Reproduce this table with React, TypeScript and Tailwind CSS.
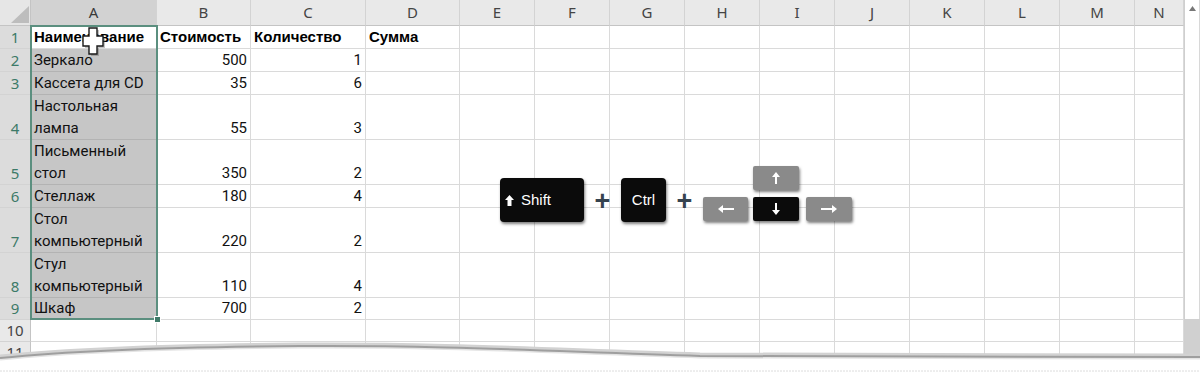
import React from "react";

const COLS = ["A", "B", "C", "D", "E", "F", "G", "H", "I", "J", "K", "L", "M", "N"];

type Row = { n: number; a?: string[]; b?: string; c?: string; d?: string; head?: boolean };

const ROWS: Row[] = [
  { n: 1, a: ["Наименование"], b: "Стоимость", c: "Количество", d: "Сумма", head: true },
  { n: 2, a: ["Зеркало"], b: "500", c: "1" },
  { n: 3, a: ["Кассета для CD"], b: "35", c: "6" },
  { n: 4, a: ["Настольная", "лампа"], b: "55", c: "3" },
  { n: 5, a: ["Письменный", "стол"], b: "350", c: "2" },
  { n: 6, a: ["Стеллаж"], b: "180", c: "4" },
  { n: 7, a: ["Стол", "компьютерный"], b: "220", c: "2" },
  { n: 8, a: ["Стул", "компьютерный"], b: "110", c: "4" },
  { n: 9, a: ["Шкаф"], b: "700", c: "2" },
  { n: 10 },
  { n: 11 },
];

const cellFont = "font-['Roboto',sans-serif] text-[15px] text-[#111]";
const boldFont = "font-['Liberation_Sans',Arial,sans-serif] font-bold text-[15px] text-black";
const headFont = "font-['Noto_Sans',sans-serif] text-[15px]";

function Cell({ row, col }: { row: Row; col: string }) {
  const inSel = col === "A" && row.n <= 9;
  const bg = inSel && row.n > 1 ? "bg-[#c6c6c6] border-[#b3b3b3]" : "bg-white border-[#dadada]";
  let content: React.ReactNode = null;
  let align = "items-start";
  if (row.head) {
    const t = col === "A" ? row.a?.[0] : col === "B" ? row.b : col === "C" ? row.c : col === "D" ? row.d : undefined;
    if (t) content = <span className={`${boldFont} whitespace-nowrap`}>{t}</span>;
  } else if (col === "A" && row.a) {
    content = row.a.map((l) => (
      <span key={l} className={`${cellFont} whitespace-nowrap`}>{l}</span>
    ));
  } else if ((col === "B" && row.b) || (col === "C" && row.c)) {
    align = "items-end";
    content = <span className={cellFont}>{col === "B" ? row.b : row.c}</span>;
  }
  return (
    <div className={`flex flex-col justify-end ${align} overflow-visible border-r border-b px-[3px] leading-[22px] ${bg}`}>
      {content}
    </div>
  );
}

function UpArrow({ className }: { className?: string }) {
  return (
    <svg width="8" height="12" viewBox="0 0 8 12" className={className}>
      <path d="M4 0 L8 5 L5 5 V12 H3 V5 H0 Z" fill="#fff" />
    </svg>
  );
}

function SideArrow({ flip }: { flip?: boolean }) {
  return (
    <svg width="16" height="8" viewBox="0 0 16 8" className={flip ? "scale-x-[-1]" : ""}>
      <path d="M0 4 L5 0 V3 H16 V5 H5 V8 Z" fill="#fff" />
    </svg>
  );
}

function Keys() {
  const plus = (
    <div className="flex h-[44px] w-[37px] items-center justify-center pt-[2px] font-['Liberation_Sans',Arial,sans-serif] text-[27px] font-bold leading-none text-[#36434f]">
      +
    </div>
  );
  const key = "shadow-[1px_2px_3px_rgba(0,0,0,0.5)]";
  return (
    <div className="absolute left-[500px] top-[166px] flex items-end">
      <div className={`flex h-[44px] w-[84px] items-center gap-[7px] rounded-[4px] bg-[#0b0b0b] pl-[5px] pt-[1px] ${key}`}>
        <svg width="9" height="11" viewBox="0 0 9 11">
          <path d="M4.5 0 L9 5 L6.5 5 V11 H2.5 V5 H0 Z" fill="#fff" />
        </svg>
        <span className="font-['Liberation_Sans',Arial,sans-serif] text-[15px] text-white">Shift</span>
      </div>
      {plus}
      <div className={`flex h-[44px] w-[45px] items-center justify-center rounded-[4px] bg-[#0b0b0b] pt-[1px] ${key}`}>
        <span className="font-['Liberation_Sans',Arial,sans-serif] text-[15px] text-white">Ctrl</span>
      </div>
      {plus}
      <div className="mb-[1px] flex flex-col items-start gap-[7px]">
        <div className={`ml-[50px] flex h-[24px] w-[46px] items-center justify-center rounded-[2px] bg-[#8a8a8a] ${key}`}>
          <UpArrow />
        </div>
        <div className="flex gap-[5px]">
          <div className={`flex h-[24px] w-[45px] items-center justify-center rounded-[2px] bg-[#8a8a8a] ${key}`}>
            <SideArrow />
          </div>
          <div className={`flex h-[24px] w-[46px] items-center justify-center rounded-[2px] bg-[#0b0b0b] ${key}`}>
            <UpArrow className="rotate-180" />
          </div>
          <div className={`ml-[2px] flex h-[24px] w-[46px] items-center justify-center rounded-[2px] bg-[#8a8a8a] ${key}`}>
            <SideArrow flip />
          </div>
        </div>
      </div>
    </div>
  );
}

export default function App() {
  return (
    <div className="relative h-[373px] w-[1200px] overflow-hidden bg-white">
      <div className="flex">
        <div className="grid grid-cols-[31px_126px_94px_115px_94px_repeat(9,75px)_49px] grid-rows-[26px_23px_23px_23px_45px_45px_23px_45px_45px_22px_22px_22px]">
          {/* corner */}
          <div className="flex items-end justify-end border-r border-b border-[#c4c4c4] bg-[#e6e6e6] pb-[2px] pr-[1px]">
            <svg width="18" height="17" viewBox="0 0 18 17">
              <path d="M0 17 L18 17 L18 0 Z" fill="#bdbdbd" />
            </svg>
          </div>
          {COLS.map((c) => (
            <div
              key={c}
              className={`flex items-center justify-center border-r border-b border-r-[#d3d3d3] border-b-[#c4c4c4] ${headFont} ${
                c === "A" ? "bg-[#d2d2d2] text-[#3a3a3a]" : "bg-[#e9e9e9] text-[#444]"
              }`}
            >
              {c}
            </div>
          ))}
          {ROWS.map((r) => (
            <React.Fragment key={r.n}>
              <div
                className={`flex items-end justify-center border-r border-b border-r-[#c4c4c4] border-b-[#d3d3d3] leading-[22px] ${headFont} ${
                  r.n <= 9 ? "bg-[#dcdcdc] text-[#3c7a68]" : "bg-[#e9e9e9] text-[#444]"
                }`}
              >
                {r.n}
              </div>
              {COLS.map((c) => (
                <Cell key={c} row={r} col={c} />
              ))}
            </React.Fragment>
          ))}
        </div>
        {/* vertical scrollbar */}
        <div className="flex h-[373px] w-[16px] flex-col border-l border-[#cfcfcf] bg-[#d0d0d0]">
          <div className="flex h-[319px] flex-col items-center border-r border-[#d8d8d8] bg-white pt-[6px]">
            <svg width="7" height="5" viewBox="0 0 7 5">
              <path d="M0 5 L3.5 0 L7 5 Z" fill="#777" />
            </svg>
          </div>
        </div>
      </div>

      {/* selection */}
      <div className="pointer-events-none absolute left-[30px] top-[25px] h-[295px] w-[128px] border-2 border-[#5b8f7f]" />
      <div className="absolute left-[154px] top-[316px] h-[7px] w-[7px] border border-white bg-[#3f7a68]" />

      {/* cursor */}
      <svg className="absolute left-[82px] top-[27px]" width="24" height="30" viewBox="0 0 24 30">
        <path d="M8 2 H16 V10 H22 V20 H16 V28 H8 V20 H2 V10 H8 Z" fill="#555" opacity="0.35" transform="translate(1 1)" />
        <path d="M7 1 H15 V9 H21 V19 H15 V27 H7 V19 H1 V9 H7 Z" fill="#fff" stroke="#1a1a1a" strokeWidth="1.4" />
      </svg>

      <Keys />

      {/* torn edge */}
      <svg className="absolute left-0 top-[330px]" width="1200" height="43" viewBox="0 0 1200 43">
        <path d="M0 28 C60 22 150 17 300 16 C450 15 560 22 700 26 L1200 27" fill="none" stroke="#d2d2d2" strokeWidth="7" />
        <path d="M0 28 C60 22 150 17 300 16 C450 15 560 22 700 26 L1200 27 L1200 43 L0 43 Z" fill="#fff" />
        <path d="M0 29 C60 23 150 18 300 17 C450 16 560 23 700 27 L1200 28" fill="none" stroke="#e4e4e4" strokeWidth="3" />
        <path d="M0 28 C60 22 150 17 300 16 C450 15 560 22 700 26 L1200 27" fill="none" stroke="#9f9f9f" strokeWidth="2" />
        <line x1="0" y1="41" x2="1200" y2="41" stroke="#dcdcdc" strokeWidth="1" strokeDasharray="2 1" />
      </svg>
    </div>
  );
}
